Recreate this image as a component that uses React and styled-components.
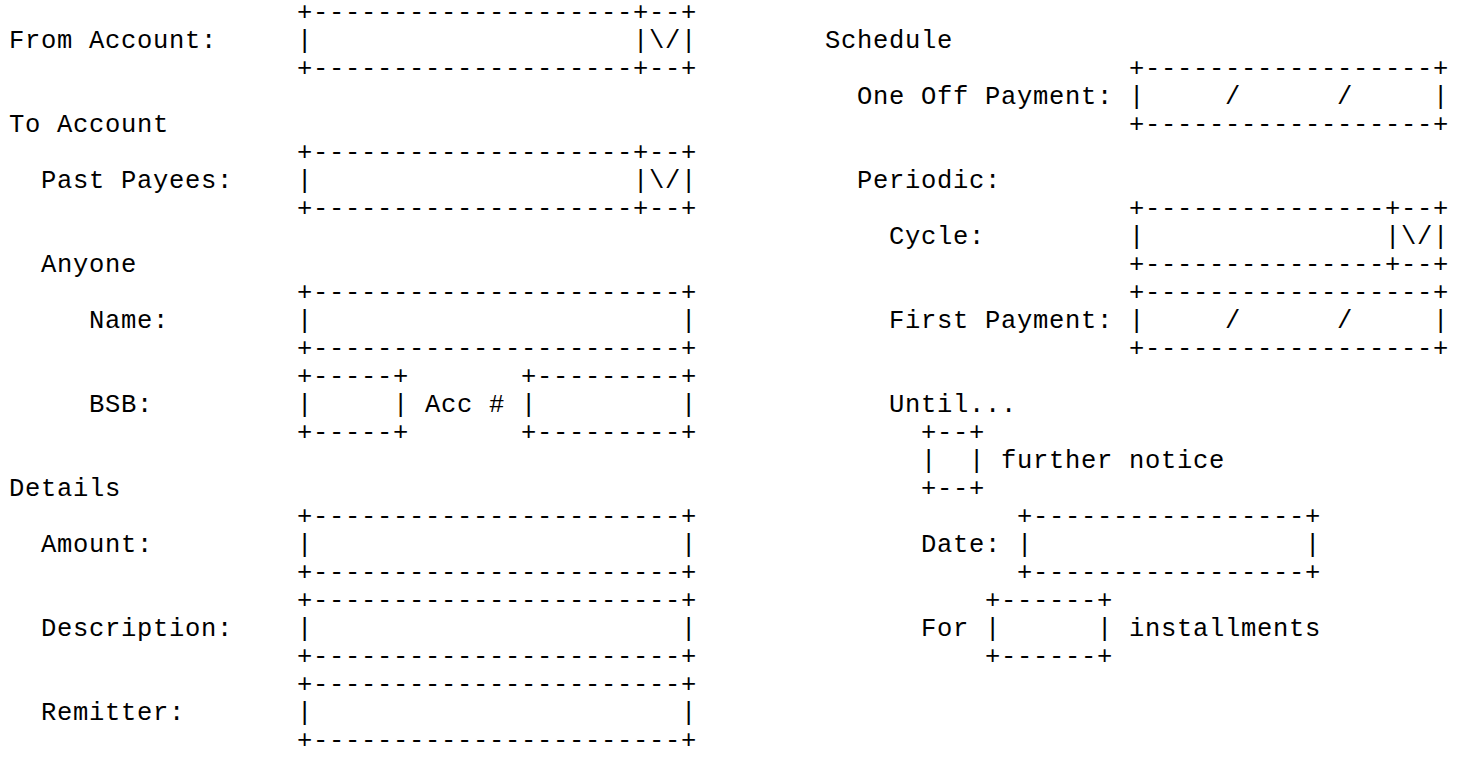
import React from "react";
import styled, { createGlobalStyle } from "styled-components";

const CHAR = 16;

const GlobalStyle = createGlobalStyle`
  html, body {
    margin: 0;
    padding: 0;
    background: #ffffff;
  }
`;

const Sheet = styled.div`
  display: flex;
  align-items: flex-start;
  padding: 0 0 0 9px;
  font-family: "Liberation Mono", "DejaVu Sans Mono", monospace;
  font-size: 25.5px;
  letter-spacing: 0.7px;
  line-height: 28px;
  color: #000000;
`;

const Column = styled.div`
  display: flex;
  flex-direction: column;
  width: ${(p) => p.$cols * CHAR}px;
  flex: none;
`;

const Line = styled.div`
  height: 28px;
  white-space: pre;
`;

const Heading = styled(Line)`
  font-weight: 400;
`;

// ascii helpers
const rule = (...widths) => "+" + widths.map((n) => "-".repeat(n)).join("+") + "+";
const cell = (...parts) => "|" + parts.join("|") + "|";
const gap = (n) => " ".repeat(n);

const Field = ({ label, at, widths, fill = [], after = "" }) => {
  const border = gap(at) + rule(...widths);
  const inner = widths.map((w, i) => (fill[i] || "").padEnd(w));
  return (
    <>
      <Line>{border}</Line>
      <Line>{label.padEnd(at) + cell(...inner) + after}</Line>
      <Line>{border}</Line>
    </>
  );
};

const Select = ({ label, at, width }) => (
  <Field label={label} at={at} widths={[width, 2]} fill={["", "\\/"]} />
);

const DateField = ({ label, at }) => (
  <Field label={label} at={at} widths={[18]} fill={["     /      /     "]} />
);

const BankRow = () => {
  const border = gap(18) + rule(5) + gap(7) + rule(9);
  return (
    <>
      <Line>{border}</Line>
      <Line>{"     BSB:".padEnd(18) + cell(gap(5)) + " Acc # " + cell(gap(9))}</Line>
      <Line>{border}</Line>
    </>
  );
};

const Blank = () => <Line> </Line>;

export default function App() {
  return (
    <>
      <GlobalStyle />
      <Sheet>
        <Column $cols={51}>
          <Select label="From Account:" at={18} width={20} />
          <Blank />
          <Heading>To Account</Heading>
          <Select label="  Past Payees:" at={18} width={20} />
          <Blank />
          <Heading>{"  Anyone"}</Heading>
          <Field label="     Name:" at={18} widths={[23]} />
          <BankRow />
          <Blank />
          <Heading>Details</Heading>
          <Field label="  Amount:" at={18} widths={[23]} />
          <Field label="  Description:" at={18} widths={[23]} />
          <Field label="  Remitter:" at={18} widths={[23]} />
        </Column>
        <Column $cols={40}>
          <Blank />
          <Heading>Schedule</Heading>
          <DateField label="  One Off Payment:" at={19} />
          <Blank />
          <Heading>{"  Periodic:"}</Heading>
          <Select label="    Cycle:" at={19} width={15} />
          <DateField label="    First Payment:" at={19} />
          <Blank />
          <Heading>{"    Until..."}</Heading>
          <Field label="" at={6} widths={[2]} after=" further notice" />
          <Field label="      Date:" at={12} widths={[17]} />
          <Field label="      For" at={10} widths={[6]} after=" installments" />
        </Column>
      </Sheet>
    </>
  );
}
